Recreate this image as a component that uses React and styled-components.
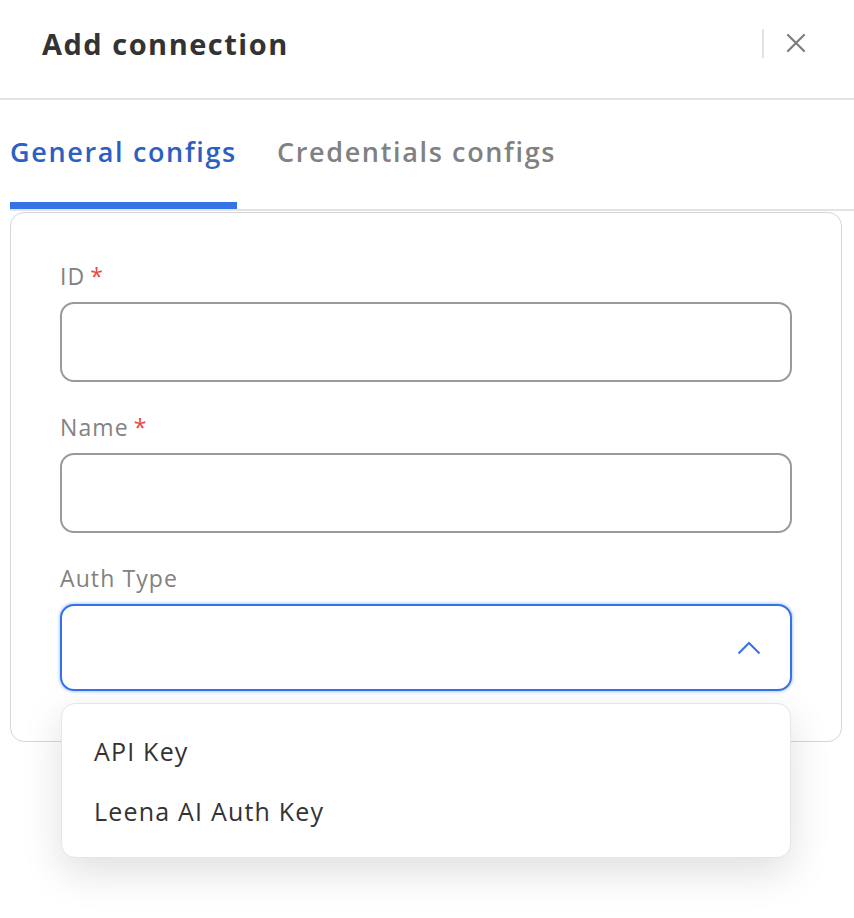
import styled, { createGlobalStyle } from "styled-components";

const GlobalStyle = createGlobalStyle`
  * { box-sizing: border-box; }
  html, body { margin: 0; padding: 0; background: #ffffff; }
  body { font-family: "Open Sans", "Noto Sans", sans-serif; }
`;

const Page = styled.div`
  width: 854px;
  height: 918px;
  background: #ffffff;
  overflow: hidden;
`;

const Header = styled.div`
  height: 100px;
  display: flex;
  align-items: center;
  padding: 0 48px 12px 42px;
  border-bottom: 2px solid #e3e3e3;
`;

const Title = styled.h1`
  flex: 1;
  margin: 0;
  font-size: 29px;
  font-weight: 700;
  color: #333333;
  letter-spacing: 1.5px;
`;

const Divider = styled.div`
  width: 2px;
  height: 29px;
  background: #e3e3e3;
  margin-right: 22px;
`;

const CloseButton = styled.button`
  border: 0;
  background: none;
  padding: 0;
  display: flex;
  cursor: pointer;
`;

const TabBar = styled.div`
  margin-left: 10px;
  height: 111px;
  display: flex;
  align-items: flex-end;
  gap: 40px;
  border-bottom: 2px solid #e3e3e3;
`;

const Tab = styled.div`
  position: relative;
  height: 100%;
  display: flex;
  align-items: center;
  padding-top: 4px;
  padding-bottom: 10px;
  font-size: 27px;
  font-weight: 600;
  letter-spacing: 1.65px;
  color: ${(p) => (p.active ? "#2b5fc4" : "#818181")};

  &::after {
    content: "";
    display: ${(p) => (p.active ? "block" : "none")};
    position: absolute;
    left: 0;
    right: 0;
    bottom: 0;
    height: 7px;
    background: #3572e6;
  }
`;

const Card = styled.div`
  position: relative;
  margin: 1px 12px 0 10px;
  height: 530px;
  border: 1px solid #d6d6d6;
  border-radius: 14px;
  padding: 48px 49px 0 49px;
  display: flex;
  flex-direction: column;
`;

const Field = styled.div`
  display: flex;
  flex-direction: column;
  margin-bottom: 30px;
`;

const Label = styled.label`
  font-size: 23px;
  line-height: 30px;
  font-weight: 500;
  letter-spacing: 1.1px;
  color: #828282;
  margin-bottom: 11px;
`;

const Required = styled.span`
  color: #e84646;
  margin-left: 5px;
`;

const Input = styled.div`
  height: ${(p) => p.h || 80}px;
  border: 2px solid ${(p) => (p.focused ? "#3572e6" : "#9a9a9a")};
  border-radius: 14px;
  background: #fff;
  display: flex;
  align-items: center;
  justify-content: flex-end;
  padding-right: 29px;
  box-shadow: ${(p) => (p.focused ? "0 0 3px 1px rgba(53,114,230,0.35)" : "none")};
`;

const SelectWrap = styled.div`
  position: relative;
`;

const Menu = styled.div`
  position: absolute;
  top: 99px;
  left: 1px;
  right: 1px;
  z-index: 2;
  background: #fff;
  border: 1px solid #e6e6e6;
  border-radius: 14px;
  padding: 17px 0 16px;
  box-shadow: 0 14px 40px rgba(0, 0, 0, 0.13);
`;

const Option = styled.div`
  height: 60px;
  line-height: 60px;
  padding-left: 32px;
  font-size: 25px;
  font-weight: 500;
  letter-spacing: 1.2px;
  color: #333333;
`;

const Fields = [
  { label: "ID", required: true },
  { label: "Name", required: true },
];

export default function App() {
  return (
    <Page>
      <GlobalStyle />
      <Header>
        <Title>Add connection</Title>
        <Divider />
        <CloseButton aria-label="Close">
          <svg width="20" height="20" viewBox="0 0 20 20">
            <path d="M2 2 L18 18 M18 2 L2 18" stroke="#7d7d7d" strokeWidth="2.2" strokeLinecap="round" />
          </svg>
        </CloseButton>
      </Header>
      <TabBar>
        <Tab active>General configs</Tab>
        <Tab>Credentials configs</Tab>
      </TabBar>
      <Card>
        {Fields.map((f) => (
          <Field key={f.label}>
            <Label>
              {f.label}
              {f.required && <Required>*</Required>}
            </Label>
            <Input />
          </Field>
        ))}
        <Field>
          <Label>Auth Type</Label>
          <SelectWrap>
            <Input focused h={87}>
              <svg width="24" height="14" viewBox="0 0 24 14">
                <polyline points="1.5,12.5 12,2 22.5,12.5" fill="none" stroke="#3572e6" strokeWidth="2" />
              </svg>
            </Input>
            <Menu>
              <Option>API Key</Option>
              <Option>Leena AI Auth Key</Option>
            </Menu>
          </SelectWrap>
        </Field>
      </Card>
    </Page>
  );
}
